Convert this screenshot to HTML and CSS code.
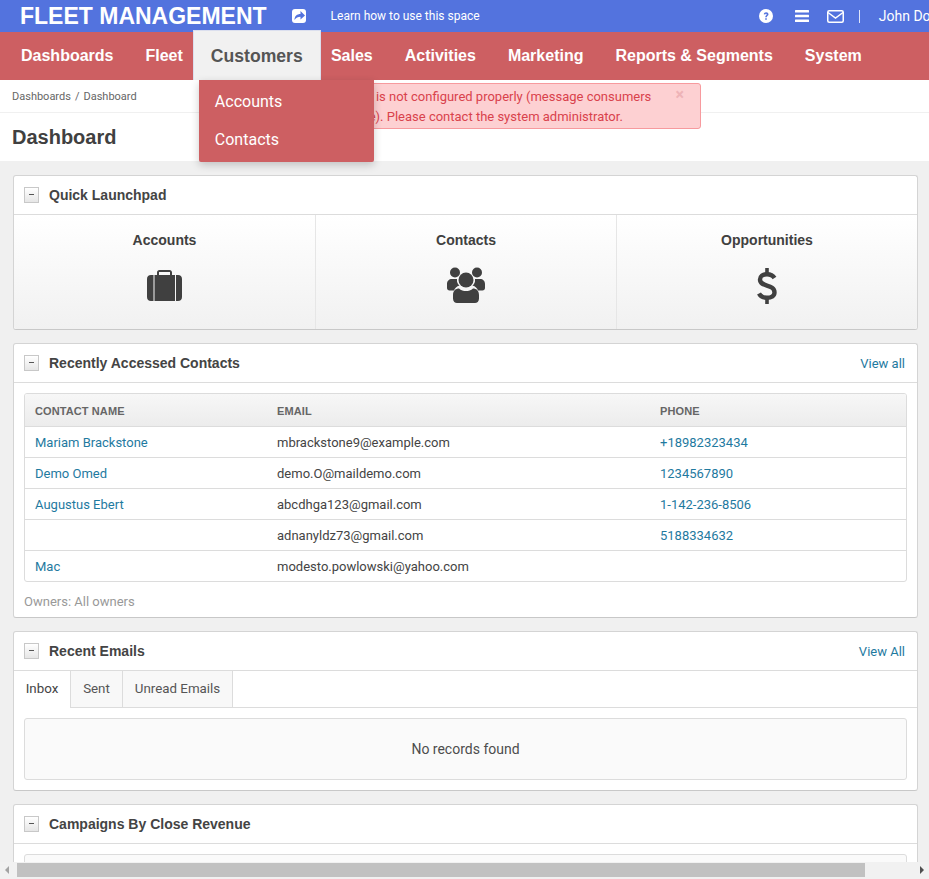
FILE: index.html
```html
<!DOCTYPE html>
<html lang="en">
<head>
    <meta charset="UTF-8">
    <meta name="viewport" content="width=device-width, initial-scale=1.0">
    <title>Dashboard</title>
    <link rel="stylesheet" href="styles.css">
</head>
<body>
<header class="topbar">
    <a class="brand">FLEET MANAGEMENT</a>
    <svg class="share-icon" width="14" height="14" viewBox="0 0 14 14"><rect width="14" height="14" rx="3" fill="#fff"/><path d="M2.500 11C2.500 7 5 5 8.500 5V2L13 6.500 8.500 10.500V7.700C6 7.700 4 8.500 2.500 11Z" fill="#5373de"/></svg>
    <a class="learn">Learn how to use this space</a>
    <div class="top-right">
        <svg class="help-icon" width="14" height="14" viewBox="0 0 14 14"><circle cx="7" cy="7" r="7" fill="#fff"/><path d="M4.700 5.300C4.900 4 5.900 3.300 7.100 3.300 8.500 3.300 9.500 4.100 9.500 5.300 9.500 6.900 7.800 6.900 7.800 8.300H6.200C6.200 6.300 7.700 6.300 7.700 5.400 7.700 5 7.400 4.800 7 4.800 6.600 4.800 6.300 5.100 6.200 5.600ZM6.200 9.200H7.800V10.800H6.200Z" fill="#5373de"/></svg>
        <svg class="bars-icon" width="14" height="12" viewBox="0 0 14 12"><rect width="14" height="2.600" rx=".5" fill="#fff"/><rect y="4.700" width="14" height="2.600" rx=".5" fill="#fff"/><rect y="9.400" width="14" height="2.600" rx=".5" fill="#fff"/></svg>
        <svg class="mail-icon" width="17" height="13" viewBox="0 0 17 13"><rect x=".75" y=".75" width="15.500" height="11.500" rx="1.500" fill="none" stroke="#fff" stroke-width="1.500"/><path d="M1 2.500L8.500 8 16 2.500" fill="none" stroke="#fff" stroke-width="1.500"/></svg>
        <span class="divider"></span>
        <span class="user">John Doe</span>
    </div>
</header>

<nav class="mainnav">
    <div class="nav-item">Dashboards</div>
    <div class="nav-item">Fleet</div>
    <div class="nav-item active">
        Customers
        <div class="dropdown">
            <a>Accounts</a>
            <a>Contacts</a>
        </div>
    </div>
    <div class="nav-item">Sales</div>
    <div class="nav-item">Activities</div>
    <div class="nav-item">Marketing</div>
    <div class="nav-item">Reports &amp; Segments</div>
    <div class="nav-item">System</div>
</nav>

<div class="alert">
    Message queue is not configured properly (message consumers<br>
    are not available). Please contact the system administrator.
    <span class="alert-close">×</span>
</div>

<div class="breadcrumb">Dashboards<span class="crumb-sep">/</span>Dashboard</div>
<div class="page-title"><h1>Dashboard</h1></div>

<main class="content">
    <section class="panel">
        <div class="panel-head">
            <span class="collapse"></span>
            <h2>Quick Launchpad</h2>
        </div>
        <div class="launchpad">
            <div class="launch-cell">
                <h3>Accounts</h3>
                <svg class="icon-case" width="35" height="31" viewBox="0 0 35 31"><path d="M10 5V2.500C10 1 11 0 12.500 0H22.500C24 0 25 1 25 2.500V5H28V31H7.500V5ZM12 5H23V2H12Z" fill="#404040" fill-rule="evenodd"/><path d="M6.500 5V31H4C1.500 31 0 29.500 0 27V9C0 6.500 1.500 5 4 5ZM29 5H31C33.500 5 35 6.500 35 9V27C35 29.500 33.500 31 31 31H29Z" fill="#404040"/></svg>
            </div>
            <div class="launch-cell">
                <h3>Contacts</h3>
                <svg class="icon-users" width="38" height="36" viewBox="0 0 38 36"><circle cx="8" cy="5.500" r="5" fill="#404040"/><circle cx="30" cy="5.500" r="5" fill="#404040"/><path d="M5 12H10C9.500 15 11 17.500 12.500 18.500 9.500 19.500 8 21 7 23.500H2.500C1 23.500 0 22.500 0 21V17C0 14 2 12 5 12ZM33 12H28C28.500 15 27 17.500 25.500 18.500 28.500 19.500 30 21 31 23.500H35.500C37 23.500 38 22.500 38 21V17C38 14 36 12 33 12Z" fill="#404040"/><circle cx="19" cy="13" r="7.500" fill="#404040"/><path d="M12 21.500C14 23.500 16.500 24 19 24 21.500 24 24 23.500 26 21.500 29 21.500 32 23.500 32 28V31.500C32 34.500 30 36 28 36H10C8 36 6 34.500 6 31.500V28C6 23.500 9 21.500 12 21.500Z" fill="#404040"/></svg>
            </div>
            <div class="launch-cell">
                <h3>Opportunities</h3>
                <svg class="icon-dollar" width="20" height="36" viewBox="0 0 20 36"><path d="M17.500 10C16 7.500 13.500 6.200 10 6.200 5.500 6.200 3 8.300 3 11.500 3 19.500 17.500 15.500 17.500 24.500 17.500 27.800 14.500 29.800 10 29.800 6.500 29.800 3.500 28.300 2 25.500" fill="none" stroke="#404040" stroke-width="4.400"/><path d="M10 0V6M10 30V36" stroke="#404040" stroke-width="3.600"/></svg>
            </div>
        </div>
    </section>

    <section class="panel">
        <div class="panel-head">
            <span class="collapse"></span>
            <h2>Recently Accessed Contacts</h2>
            <a class="view-all">View all</a>
        </div>
        <div class="panel-body">
            <div class="table-wrap">
                <table class="grid">
                    <thead>
                        <tr><th class="col-name">Contact name</th><th class="col-email">Email</th><th>Phone</th></tr>
                    </thead>
                    <tbody>
                        <tr><td><a>Mariam Brackstone</a></td><td>mbrackstone9@example.com</td><td><a>+18982323434</a></td></tr>
                        <tr><td><a>Demo Omed</a></td><td>demo.O@maildemo.com</td><td><a>1234567890</a></td></tr>
                        <tr><td><a>Augustus Ebert</a></td><td>abcdhga123@gmail.com</td><td><a>1-142-236-8506</a></td></tr>
                        <tr><td></td><td>adnanyldz73@gmail.com</td><td><a>5188334632</a></td></tr>
                        <tr><td><a>Mac</a></td><td>modesto.powlowski@yahoo.com</td><td></td></tr>
                    </tbody>
                </table>
            </div>
            <p class="owners">Owners: All owners</p>
        </div>
    </section>

    <section class="panel">
        <div class="panel-head">
            <span class="collapse"></span>
            <h2>Recent Emails</h2>
            <a class="view-all">View All</a>
        </div>
        <div class="tabs">
            <a class="tab current">Inbox</a>
            <a class="tab">Sent</a>
            <a class="tab">Unread Emails</a>
        </div>
        <div class="tab-body">
            <div class="no-records">No records found</div>
        </div>
    </section>

    <section class="panel">
        <div class="panel-head">
            <span class="collapse"></span>
            <h2>Campaigns By Close Revenue</h2>
        </div>
        <div class="panel-body">
            <div class="no-records"></div>
        </div>
    </section>
</main>

<div class="hscroll">
    <span class="arrow-left"></span>
    <span class="thumb"></span>
    <span class="arrow-right"></span>
</div>
</body>
</html>
```

FILE: styles.css
```css
html, body {
    margin: 0;
    height: 879px;
    overflow: hidden;
}
body {
    position: relative;
    font-family: "Liberation Sans", Arial, sans-serif;
    font-size: 14px;
    color: #444;
    background: #f0f0f0;
}
a {
    color: #1f7a9f;
    text-decoration: none;
}

/* top bar */
.topbar {
    display: flex;
    align-items: center;
    height: 32px;
    padding-left: 20px;
    background: #5373de;
    color: #fff;
}
.brand {
    font-size: 23px;
    font-weight: bold;
    color: #fff;
}
.share-icon {
    margin-left: 25px;
}
.learn {
    margin-left: 25px;
    font-family: Roboto, sans-serif;
    font-size: 12px;
    color: #fff;
}
.top-right {
    display: flex;
    align-items: center;
    margin-left: auto;
    margin-right: -9px;
    font-family: Roboto, sans-serif;
    font-size: 14px;
}
.bars-icon {
    margin-left: 22px;
}
.mail-icon {
    margin-left: 18px;
}
.divider {
    width: 1px;
    height: 13px;
    margin-left: 15px;
    background: #dfe5fa;
}
.user {
    margin-left: 19px;
    white-space: nowrap;
}

/* main nav */
.mainnav {
    display: flex;
    height: 48px;
    background: #cd5f62;
    color: #fff;
    font-size: 16px;
    font-weight: bold;
}
.nav-item {
    position: relative;
    padding: 0 16px;
    line-height: 48px;
    white-space: nowrap;
}
.nav-item:first-child {
    padding-left: 21px;
}
.nav-item.active {
    margin: -2px -5.8px 0 -6px;
    padding: 0 17px;
    height: 50px;
    line-height: 50px;
    box-sizing: border-box;
    background: #f1f1f1;
    color: #555;
    font-size: 17.6px;
    border: 1px solid #dbdfee;
    border-bottom: 0;
}
.dropdown {
    position: absolute;
    top: 49px;
    left: 5px;
    z-index: 5;
    width: 175px;
    height: 82px;
    padding-top: 3px;
    box-sizing: border-box;
    background: #cd5f62;
    border-radius: 0 0 2px 2px;
    box-shadow: 0 3px 8px rgba(0, 0, 0, .2);
    font-family: Roboto, sans-serif;
    font-size: 16px;
    font-weight: normal;
}
.dropdown a {
    display: block;
    padding-left: 16px;
    height: 38px;
    line-height: 38px;
    color: #fff;
}

/* alert */
.alert {
    position: absolute;
    top: 83px;
    left: 268px;
    z-index: 3;
    width: 419px;
    height: 41px;
    padding: 3px 0 0 12px;
    border: 1px solid #f79a9e;
    border-radius: 3px;
    background: #fdd0d2;
    color: #d9424c;
    font-family: Roboto, sans-serif;
    font-size: 13px;
    line-height: 20px;
    white-space: nowrap;
}
.alert-close {
    position: absolute;
    top: 1px;
    right: 16px;
    color: #eeb3b7;
    font-size: 16px;
    font-weight: bold;
    line-height: 20px;
}

/* breadcrumb and title */
.breadcrumb {
    height: 33px;
    padding-left: 12px;
    background: #fff;
    border-bottom: 1px solid #f0f0f0;
    box-sizing: border-box;
    color: #666;
    font-family: Roboto, sans-serif;
    font-size: 11px;
    line-height: 33px;
}
.crumb-sep {
    padding: 0 4px;
}
.page-title {
    height: 48px;
    padding-left: 12px;
    background: #fff;
    box-sizing: border-box;
}
.page-title h1 {
    margin: 0;
    color: #404040;
    font-size: 20px;
    line-height: 48px;
}

/* panels */
.content {
    display: flex;
    flex-direction: column;
    gap: 13px;
    padding: 14px 11px 0 13px;
}
.panel {
    flex-shrink: 0;
    background: #fff;
    border: 1px solid #d4d4d4;
    border-bottom-color: #c8c8c8;
    border-radius: 3px;
}
.panel-head {
    display: flex;
    align-items: center;
    height: 38px;
    padding: 0 12px 0 10px;
    border-bottom: 1px solid #dcdcdc;
}
.panel-head h2 {
    margin: 0 0 0 10px;
    color: #444;
    font-size: 14px;
    font-weight: bold;
}
.collapse {
    position: relative;
    display: block;
    width: 13px;
    height: 14px;
    border: 1px solid #c8c8c8;
    background: linear-gradient(#fff, #e6e6e6);
}
.collapse::after {
    content: "";
    position: absolute;
    top: 6px;
    left: 4px;
    width: 5px;
    height: 1px;
    background: #555;
}
.view-all {
    margin-left: auto;
    font-family: Roboto, sans-serif;
    font-size: 13px;
}

/* launchpad */
.launchpad {
    display: grid;
    grid-template-columns: 301px 301px 1fr;
    height: 114px;
    background: linear-gradient(#fff, #f1f1f1);
    border-radius: 0 0 3px 3px;
}
.launch-cell {
    text-align: center;
    border-left: 1px solid #e6e6e6;
}
.launch-cell:first-child {
    border-left: 0;
}
.launch-cell h3 {
    margin: 17px 0 0;
    height: 16px;
    color: #404040;
    font-size: 14px;
    line-height: 16px;
}
.launch-cell svg {
    display: block;
    margin-left: auto;
    margin-right: auto;
}
.launch-cell .icon-case {
    margin-top: 22px;
}
.launch-cell .icon-users {
    margin-top: 19px;
}
.launch-cell .icon-dollar {
    margin-top: 20px;
}

/* contacts table */
.panel-body {
    padding: 10px 10px 8px;
}
.table-wrap {
    border: 1px solid #dcdcdc;
    border-radius: 3px;
    overflow: hidden;
}
.grid {
    width: 100%;
    border-collapse: separate;
    border-spacing: 0;
    table-layout: fixed;
    font-family: Roboto, sans-serif;
    font-size: 13px;
}
.grid th {
    height: 33px;
    padding: 1px 10px 0;
    box-sizing: border-box;
    background: linear-gradient(#f7f7f7, #ececec);
    border-bottom: 1px solid #dcdcdc;
    color: #666;
    font-family: "Liberation Sans", Arial, sans-serif;
    font-size: 11px;
    letter-spacing: .1px;
    text-align: left;
    text-transform: uppercase;
}
.col-name {
    width: 242px;
}
.col-email {
    width: 383px;
}
.grid td {
    height: 31px;
    padding: 0 10px;
    box-sizing: border-box;
    border-bottom: 1px solid #dcdcdc;
    color: #444;
}
.grid td a {
    color: #1f7a9f;
}
.grid tbody tr:last-child td {
    border-bottom: 0;
    height: 30px;
}
.owners {
    margin: 12px 0 -1px;
    color: #999;
    font-family: Roboto, sans-serif;
    font-size: 13px;
    line-height: 16px;
}

/* tabs */
.tabs {
    display: grid;
    grid-template-columns: 57px 52px 110px;
    height: 37px;
    box-sizing: border-box;
    border-bottom: 1px solid #dcdcdc;
}
.tab {
    height: 36px;
    background: #f8f8f8;
    border-right: 1px solid #dcdcdc;
    color: #555;
    font-family: Roboto, sans-serif;
    font-size: 13.33px;
    line-height: 35px;
    text-align: center;
}
.tab.current {
    background: #fff;
    height: 37px;
    color: #444;
}
.tab-body {
    padding: 10px 10px;
}
.no-records {
    height: 60px;
    background: #fafafa;
    border: 1px solid #dcdcdc;
    border-radius: 3px;
    color: #4d4d4d;
    font-family: Roboto, sans-serif;
    font-size: 14px;
    line-height: 60px;
    text-align: center;
}

/* fake horizontal scrollbar, sits over the page */
.hscroll {
    position: absolute;
    left: 0;
    right: 0;
    bottom: 0;
    z-index: 10;
    height: 17px;
    background: #f1f1f1;
}
.thumb {
    position: absolute;
    top: 1px;
    left: 17px;
    width: 848px;
    height: 14px;
    background: #c1c1c1;
}
.arrow-left,
.arrow-right {
    position: absolute;
    top: 4px;
    width: 0;
    height: 0;
    border-top: 4px solid transparent;
    border-bottom: 4px solid transparent;
}
.arrow-left {
    left: 5px;
    border-right: 4px solid #a3a3a3;
}
.arrow-right {
    right: 5px;
    border-left: 4px solid #505050;
}
```
